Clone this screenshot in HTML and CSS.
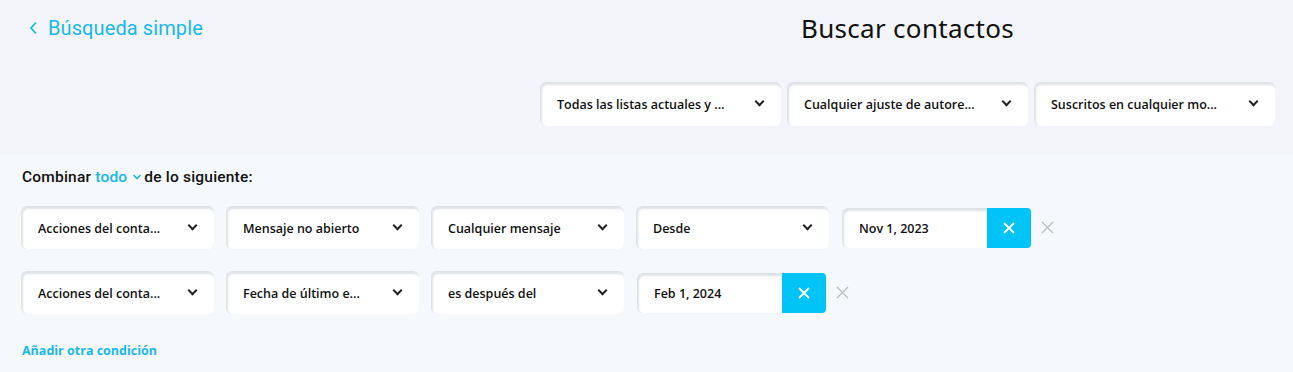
FILE: index.html
```html
<!DOCTYPE html>
<html lang="es">
<head>
    <meta charset="UTF-8">
    <title>Buscar contactos</title>
    <link rel="stylesheet" href="styles.css">
</head>
<body>
    <section class="top">
        <header class="header">
            <a class="back-link" href="#">
                <svg width="9" height="14" viewBox="0 0 9 14"><path d="M7 1.5 L2 7 L7 12.5" fill="none" stroke="#1ab7ea" stroke-width="1.8"/></svg>
                Búsqueda simple
            </a>
            <h1 class="title">Buscar contactos</h1>
        </header>
        <div class="filters">
            <div class="select wide">Todas las listas actuales y ...<span class="chev"></span></div>
            <div class="select wide">Cualquier ajuste de autore...<span class="chev"></span></div>
            <div class="select wide">Suscritos en cualquier mo...<span class="chev"></span></div>
        </div>
    </section>

    <section class="conditions">
        <p class="combine">Combinar <span class="combine-mode">todo<svg class="mode-chev" width="10" height="6" viewBox="0 0 10 6"><path d="M1.5 1 L5 4.5 L8.5 1" fill="none" stroke="#1ab7ea" stroke-width="1.6"/></svg></span>de lo siguiente:</p>

        <div class="row">
            <div class="select">Acciones del conta...<span class="chev"></span></div>
            <div class="select">Mensaje no abierto<span class="chev"></span></div>
            <div class="select">Cualquier mensaje<span class="chev"></span></div>
            <div class="select">Desde<span class="chev"></span></div>
            <div class="date-group">
                <div class="date-input">Nov 1, 2023</div>
                <button class="date-clear"><svg width="12" height="12" viewBox="0 0 12 12"><path d="M1 1 L11 11 M11 1 L1 11" stroke="#fff" stroke-width="1.8"/></svg></button>
            </div>
            <svg class="remove" width="13" height="13" viewBox="0 0 13 13"><path d="M1 1 L12 12 M12 1 L1 12" stroke="#b3bcc5" stroke-width="1.2"/></svg>
        </div>

        <div class="row">
            <div class="select">Acciones del conta...<span class="chev"></span></div>
            <div class="select">Fecha de último e...<span class="chev"></span></div>
            <div class="select">es después del<span class="chev"></span></div>
            <div class="date-group">
                <div class="date-input">Feb 1, 2024</div>
                <button class="date-clear"><svg width="12" height="12" viewBox="0 0 12 12"><path d="M1 1 L11 11 M11 1 L1 11" stroke="#fff" stroke-width="1.8"/></svg></button>
            </div>
            <svg class="remove" width="13" height="13" viewBox="0 0 13 13"><path d="M1 1 L12 12 M12 1 L1 12" stroke="#b3bcc5" stroke-width="1.2"/></svg>
        </div>

        <a class="add-link" href="#">Añadir otra condición</a>
    </section>
</body>
</html>
```

FILE: styles.css
```css
body {
    margin: 0;
    background-color: #f6f9fb;
    font-family: "Open Sans", Arial, sans-serif;
    color: #111111;
}

.top {
    background-color: #f4f5fa;
    height: 154px;
    box-sizing: border-box;
    padding-top: 11px;
}

.header {
    display: flex;
    align-items: center;
    height: 34px;
}

.back-link {
    display: flex;
    align-items: center;
    gap: 10px;
    margin-left: 29px;
    width: 772px;
    font-family: Roboto, sans-serif;
    font-size: 20px;
    letter-spacing: 0.1px;
    color: #1ab7ea;
    text-decoration: none;
}

.title {
    margin: 0;
    font-family: "Noto Sans", sans-serif;
    font-weight: 400;
    font-size: 26px;
    letter-spacing: 0.3px;
    color: #111111;
}

.filters {
    display: flex;
    justify-content: flex-end;
    gap: 6px;
    padding-right: 18px;
    margin-top: 37px;
}

.select {
    position: relative;
    width: 193px;
    height: 43px;
    box-sizing: border-box;
    padding: 0 16px;
    display: flex;
    align-items: center;
    background-color: #fff;
    border-radius: 6px;
    border-top: 1px solid #dde2e9;
    border-left: 1px solid #dde2e9;
    box-shadow: inset 1px 2px 2px rgba(160, 170, 185, 0.35);
    font-size: 12.5px;
    font-weight: 600;
    white-space: nowrap;
}

.select.wide {
    width: 241px;
    height: 44px;
}

.chev {
    position: absolute;
    right: 18px;
    top: 15px;
    width: 5px;
    height: 5px;
    border-right: 2px solid #222;
    border-bottom: 2px solid #222;
    transform: rotate(45deg);
}

.conditions {
    padding: 13px 21px 0;
}

.combine {
    margin: 0 0 19px 1px;
    font-family: Roboto, sans-serif;
    font-weight: 500;
    font-size: 15.5px;
    letter-spacing: 0.2px;
    line-height: 20px;
}

.combine-mode {
    color: #1ab7ea;
}

.mode-chev {
    margin: 0 2px 2px 5px;
}

.row {
    display: flex;
    align-items: center;
    gap: 12px;
    margin-bottom: 22px;
}

.date-group {
    display: flex;
    margin-left: 1px;
    height: 40px;
}

.date-input {
    width: 145px;
    box-sizing: border-box;
    padding-left: 16px;
    display: flex;
    align-items: center;
    background-color: #fff;
    border-radius: 6px 0 0 6px;
    border-top: 1px solid #dde2e9;
    border-left: 1px solid #dde2e9;
    box-shadow: inset 1px 2px 2px rgba(160, 170, 185, 0.35);
    font-size: 12.5px;
    font-weight: 600;
}

.date-clear {
    width: 44px;
    border: none;
    border-radius: 0 4px 4px 0;
    background-color: #00c4f5;
    display: flex;
    align-items: center;
    justify-content: center;
    padding: 0;
    cursor: pointer;
}

.remove {
    margin-left: -2px;
}

.add-link {
    display: inline-block;
    margin-top: 6px;
    margin-left: 1px;
    color: #1ab7ea;
    font-size: 12.5px;
    font-weight: 700;
    text-decoration: none;
}
```
